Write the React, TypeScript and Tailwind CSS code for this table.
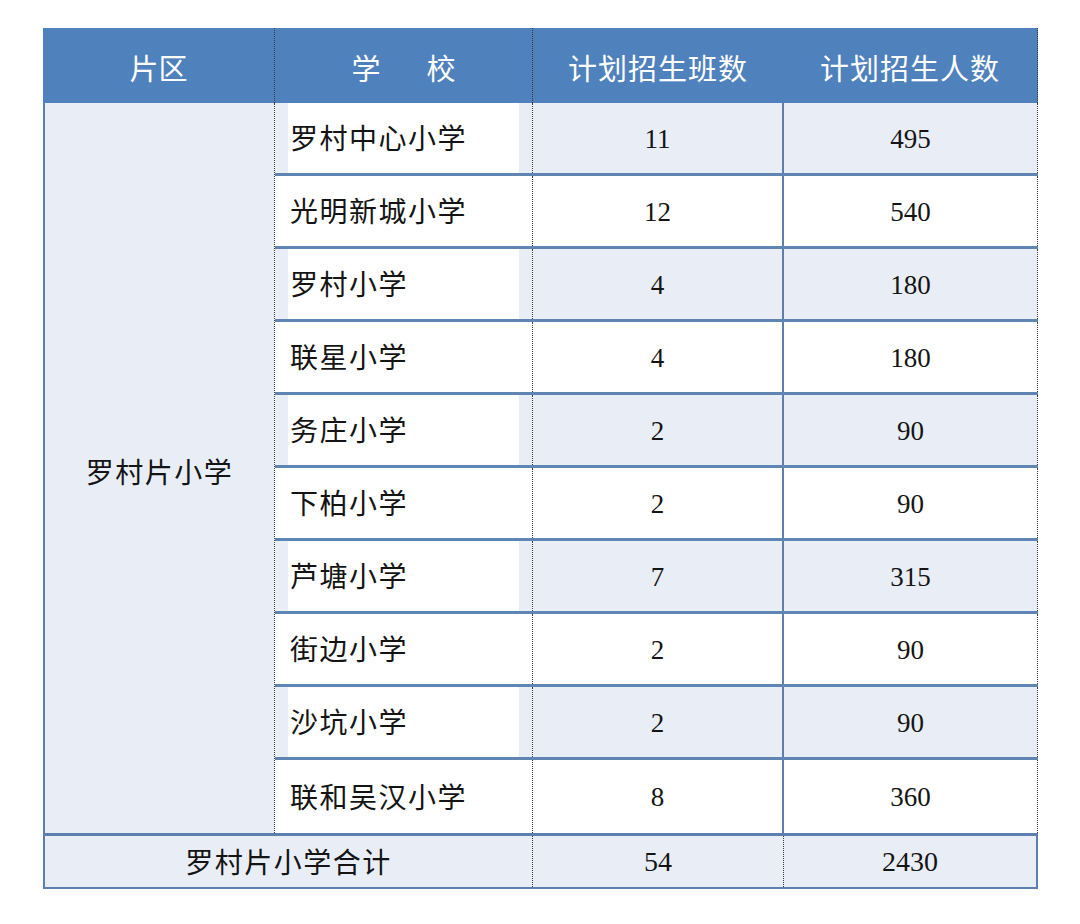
import React from "react";

const rows: [string, string, string][] = [
  ["罗村中心小学", "11", "495"],
  ["光明新城小学", "12", "540"],
  ["罗村小学", "4", "180"],
  ["联星小学", "4", "180"],
  ["务庄小学", "2", "90"],
  ["下柏小学", "2", "90"],
  ["芦塘小学", "7", "315"],
  ["街边小学", "2", "90"],
  ["沙坑小学", "2", "90"],
  ["联和吴汉小学", "8", "360"],
];

const serif = { fontFamily: '"Liberation Serif", "Noto Sans CJK SC", serif' };

function Dots() {
  return <div className="w-0 self-stretch border-l border-dotted border-[#3a3a3a]" />;
}

export default function App() {
  return (
    <div className="min-h-[924px] w-[1080px] bg-white pt-[28px] pl-[43px]" style={serif}>
      <div className="w-[995px] text-[#141414]">
        {/* ── Header ── */}
        <div
          className="flex h-[75px] bg-[#4f81bd] text-[29px] text-white"
          style={{ fontFamily: '"Noto Sans CJK SC", sans-serif' }}
        >
          <div className="flex w-[231px] items-center justify-center pt-1">片区</div>
          <Dots />
          <div className="flex w-[257px] items-center justify-center gap-[46px] pt-1">
            <span>学</span>
            <span>校</span>
          </div>
          <Dots />
          <div className="flex w-[250px] items-center justify-center pt-1 tracking-[1px]">计划招生班数</div>
          <div className="flex w-[254px] items-center justify-center pt-1 tracking-[1px]">计划招生人数</div>
          <Dots />
        </div>

        {/* ── Body ── */}
        <div className="flex">
          <div className="flex w-[231px] items-center justify-center border-l-2 border-[#5b80b0] bg-[#e9eef6] pt-3 text-[28px] tracking-[1.5px]">
            罗村片小学
          </div>
          <Dots />
          <div className="flex flex-col">
            {rows.map(([name, classes, people], i) => {
              const shaded = i % 2 === 0;
              const last = i === rows.length - 1;
              return (
                <div key={name} className={`flex h-[73px] ${last ? "" : "border-b-[3px] border-[#5f85b5]"}`}>
                  <div className={`flex w-[257px] px-[13px] ${shaded ? "bg-[#e9eef6]" : "bg-white"}`}>
                    <div className="flex flex-1 items-center bg-white pt-1 pl-[2px] text-[28px] tracking-[1.5px]">{name}</div>
                  </div>
                  <Dots />
                  <div className={`flex w-[249px] items-center justify-center pt-[2px] text-[27px] ${shaded ? "bg-[#e9eef6]" : "bg-white"}`}>
                    {classes}
                  </div>
                  <div className="w-[2px] bg-[#5b80b0]" />
                  <div className={`flex w-[253px] items-center justify-center pt-[2px] text-[27px] ${shaded ? "bg-[#e9eef6]" : "bg-white"}`}>
                    {people}
                  </div>
                  <Dots />
                </div>
              );
            })}
          </div>
        </div>

        {/* ── Total ── */}
        <div className="flex h-[56px] border-2 border-t-[3px] border-[#5b80b0] bg-[#e9eef6]">
          <div className="flex w-[487px] items-center justify-center pt-1 text-[28px] tracking-[1.5px]">罗村片小学合计</div>
          <Dots />
          <div className="flex w-[250px] items-center justify-center text-[28px]">54</div>
          <Dots />
          <div className="flex flex-1 items-center justify-center text-[28px]">2430</div>
        </div>
      </div>
    </div>
  );
}
